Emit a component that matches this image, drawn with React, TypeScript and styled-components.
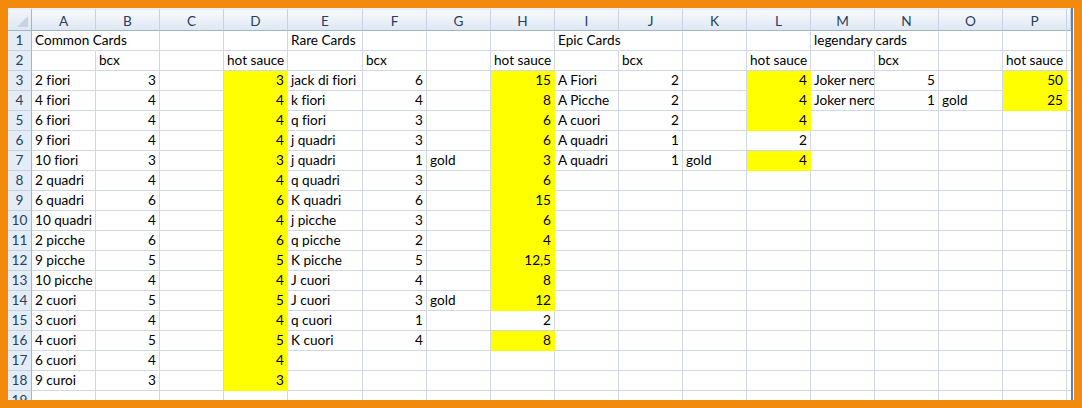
import React from "react";
import styled, { createGlobalStyle } from "styled-components";

const Global = createGlobalStyle`
  html, body { margin: 0; padding: 0; background: #ffffff; }
  * { box-sizing: border-box; }
`;

const COLS = ["A","B","C","D","E","F","G","H","I","J","K","L","M","N","O","P","Q"];
const WIDTHS = [64,64,64,64,75,64,64,64,64,64,64,64,64,64,64,64,4];
const ROWS = 19;

type CellDef = { v: string; num?: boolean; fill?: boolean; spill?: boolean; clip?: boolean };

const data: Record<string, CellDef> = {};
const put = (ref: string, v: string, extra: Partial<CellDef> = {}) => {
  data[ref] = { v, num: /^[0-9,]+$/.test(v), ...extra };
};

put("A1", "Common Cards", { spill: true });
put("E1", "Rare Cards");
put("I1", "Epic Cards", { spill: true });
put("M1", "legendary cards", { spill: true });
["B","F","J","N"].forEach((c) => put(c + "2", "bcx"));
["D","H","L","P"].forEach((c) => put(c + "2", "hot sauce"));

const common: [string, string, string][] = [
  ["2 fiori","3","3"],["4 fiori","4","4"],["6 fiori","4","4"],["9 fiori","4","4"],
  ["10 fiori","3","3"],["2 quadri","4","4"],["6 quadri","6","6"],["10 quadri","4","4"],
  ["2 picche","6","6"],["9 picche","5","5"],["10 picche","4","4"],["2 cuori","5","5"],
  ["3 cuori","4","4"],["4 cuori","5","5"],["6 cuori","4","4"],["9 curoi","3","3"],
];
common.forEach(([a, b, d], i) => {
  const r = i + 3;
  put("A" + r, a);
  put("B" + r, b);
  put("D" + r, d, { fill: true });
});

const rare: [string, string, string, string, boolean][] = [
  ["jack di fiori","6","","15",true],["k fiori","4","","8",true],["q fiori","3","","6",true],
  ["j quadri","3","","6",true],["j quadri","1","gold","3",true],["q quadri","3","","6",true],
  ["K quadri","6","","15",true],["j picche","3","","6",true],["q picche","2","","4",true],
  ["K picche","5","","12,5",true],["J cuori","4","","8",true],["J cuori","3","gold","12",true],
  ["q cuori","1","","2",false],["K cuori","4","","8",true],
];
rare.forEach(([e, f, g, h, y], i) => {
  const r = i + 3;
  put("E" + r, e);
  put("F" + r, f);
  if (g) put("G" + r, g);
  put("H" + r, h, { fill: y });
});

const epic: [string, string, string, string, boolean][] = [
  ["A Fiori","2","","4",true],["A Picche","2","","4",true],["A cuori","2","","4",true],
  ["A quadri","1","","2",false],["A quadri","1","gold","4",true],
];
epic.forEach(([a, b, c, d, y], i) => {
  const r = i + 3;
  put("I" + r, a);
  put("J" + r, b);
  if (c) put("K" + r, c);
  put("L" + r, d, { fill: y });
});

put("M3", "Joker nero", { clip: true });
put("N3", "5");
put("P3", "50", { fill: true });
put("M4", "Joker nero", { clip: true });
put("N4", "1");
put("O4", "gold");
put("P4", "25", { fill: true });

const Frame = styled.div`
  width: 1082px;
  height: 408px;
  background: #f28a0e;
  padding: 8px;
  display: flex;
`;

const Window = styled.div`
  flex: 1;
  display: flex;
  background: #ffffff;
  overflow: hidden;
`;

const Sheet = styled.div`
  flex: 1;
  overflow: hidden;
  display: grid;
  grid-template-columns: 24px ${WIDTHS.map((w) => w + "px").join(" ")};
  grid-template-rows: 23px repeat(${ROWS}, 20px);
  align-content: start;
  font-family: Lato, "Liberation Sans", sans-serif;
  font-size: 13.6px;
  font-variant-ligatures: none;
  color: #000000;
`;

const EdgeBar = styled.div`
  width: 3px;
  border-left: 2px solid #5a7ec2;
  background: #ffffff;
`;

const Corner = styled.div`
  position: relative;
  background: linear-gradient(#f1f5fa, #dfe7f2);
  border-right: 1px solid #9eb6ce;
  border-bottom: 1px solid #9eb6ce;
  border-top: 2px solid #e8eef6;
  &::after {
    content: "";
    position: absolute;
    right: 3px;
    bottom: 3px;
    width: 0;
    height: 0;
    border-left: 11px solid transparent;
    border-bottom: 11px solid #c6d3e4;
  }
`;

const ColHead = styled.div`
  background: linear-gradient(#f8fafd 0%, #edf2f8 45%, #dfe7f2 100%);
  border-top: 2px solid #e8eef6;
  border-right: 1px solid #c5d2e2;
  border-bottom: 1px solid #9eb6ce;
  display: flex;
  align-items: center;
  justify-content: center;
  color: #27405f;
  padding-top: 1px;
  overflow: hidden;
`;

const RowHead = styled.div`
  background: #e4ecf7;
  border-right: 1px solid #9eb6ce;
  border-bottom: 1px solid #c5d2e2;
  display: flex;
  align-items: flex-end;
  justify-content: center;
  padding-bottom: 1px;
  color: #27405f;
  line-height: 17px;
`;

const Cell = styled.div<{ $num?: boolean; $fill?: boolean; $spill?: boolean; $clip?: boolean }>`
  background: ${(p) => (p.$fill ? "#ffff00" : "transparent")};
  border-right: 1px solid ${(p) => (p.$fill ? "#ffff00" : p.$spill ? "transparent" : "#d0d7e5")};
  border-bottom: 1px solid ${(p) => (p.$fill ? "#ffff00" : "#d0d7e5")};
  display: flex;
  align-items: flex-end;
  justify-content: ${(p) => (p.$num ? "flex-end" : "flex-start")};
  padding: 0 3px 1px 3px;
  white-space: nowrap;
  line-height: 17px;
  overflow: ${(p) => (p.$spill ? "visible" : "hidden")};
  position: relative;
  z-index: ${(p) => (p.$spill ? 1 : 0)};
`;

export default function App() {
  const rows = Array.from({ length: ROWS }, (_, i) => i + 1);
  return (
    <>
      <Global />
      <Frame>
        <Window>
          <Sheet>
            <Corner />
            {COLS.map((c) => (
              <ColHead key={c}>{c === "Q" ? "" : c}</ColHead>
            ))}
            {rows.map((r) => (
              <React.Fragment key={r}>
                <RowHead>{r}</RowHead>
                {COLS.map((c) => {
                  const d = data[c + r];
                  return (
                    <Cell
                      key={c + r}
                      $num={d?.num}
                      $fill={d?.fill}
                      $spill={d?.spill}
                      $clip={d?.clip}
                    >
                      {d?.v ?? ""}
                    </Cell>
                  );
                })}
              </React.Fragment>
            ))}
          </Sheet>
          <EdgeBar />
        </Window>
      </Frame>
    </>
  );
}
